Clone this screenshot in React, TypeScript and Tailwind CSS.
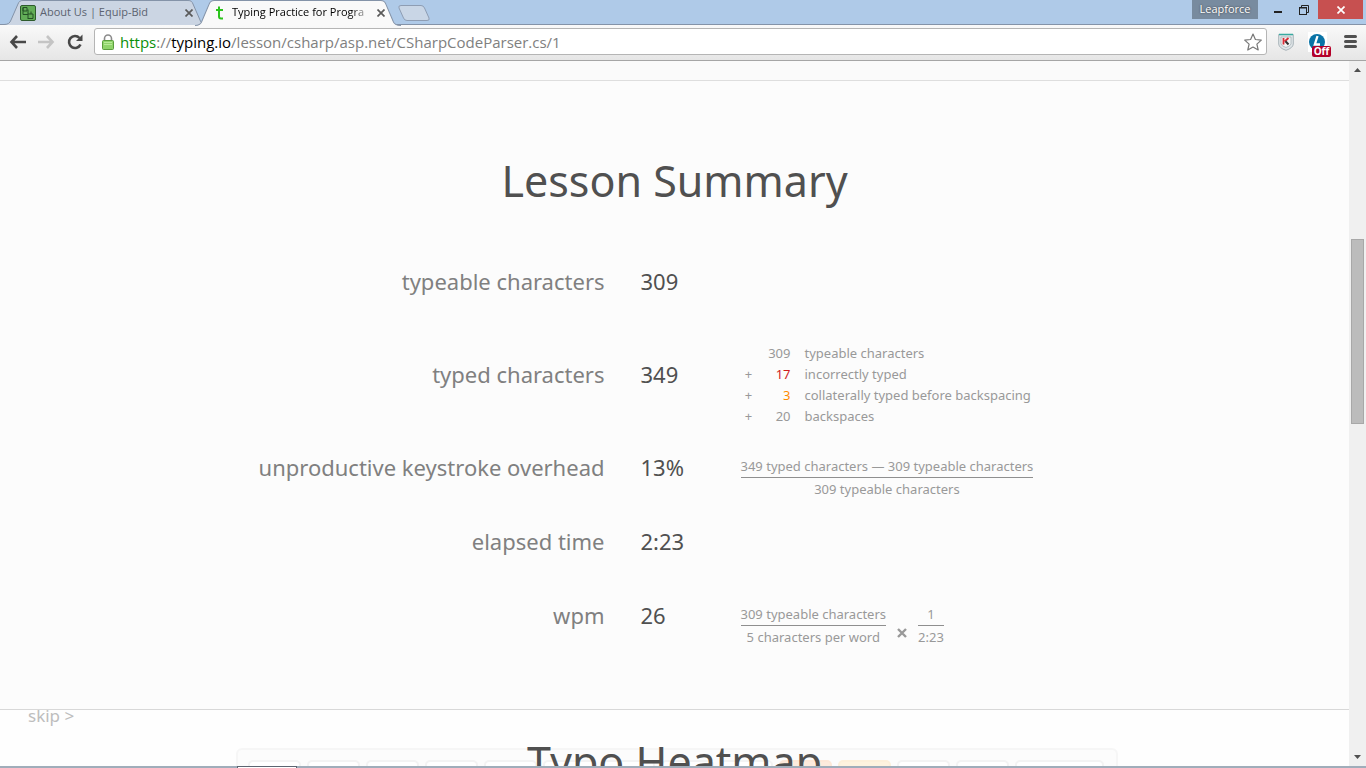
import React from "react";

type Stat = { label: string; value: string; tall?: boolean; detail?: React.ReactNode };

function Fraction({ top, bottom }: { top: string; bottom: string }) {
  return (
    <span className="inline-flex flex-col text-center">
      <span className="h-[23px] border-b border-[#8f8f8f] leading-[22px]">{top}</span>
      <span className="h-[23px] leading-[22px]">{bottom}</span>
    </span>
  );
}

const breakdown = [
  { sign: "", count: "309", text: "typeable characters", color: "text-[#999]" },
  { sign: "+", count: "17", text: "incorrectly typed", color: "text-[#d01c1c]" },
  { sign: "+", count: "3", text: "collaterally typed before backspacing", color: "text-[#ff8c00]" },
  { sign: "+", count: "20", text: "backspaces", color: "text-[#999]" },
];

const stats: Stat[] = [
  { label: "typeable characters", value: "309" },
  {
    label: "typed characters",
    value: "349",
    tall: true,
    detail: (
      <ul>
        {breakdown.map((b) => (
          <li key={b.text} className="flex h-[21px] items-center">
            <span className="w-4 text-center text-[13px]">{b.sign}</span>
            <span className={`w-[34px] text-right ${b.color}`}>{b.count}</span>
            <span className="pl-[14px]">{b.text}</span>
          </li>
        ))}
      </ul>
    ),
  },
  {
    label: "unproductive keystroke overhead",
    value: "13%",
    detail: <Fraction top="349 typed characters — 309 typeable characters" bottom="309 typeable characters" />,
  },
  { label: "elapsed time", value: "2:23" },
  {
    label: "wpm",
    value: "26",
    detail: (
      <div className="flex items-end">
        <Fraction top="309 typeable characters" bottom="5 characters per word" />
        <svg className="mx-[11px] mb-[11px] h-[10px] w-[10px]" viewBox="0 0 10 10" fill="none" stroke="#999" strokeWidth="2.4" aria-label="times">
          <path d="M1 1l8 8M9 1l-8 8" />
        </svg>
        <Fraction top="1" bottom="2:23" />
      </div>
    ),
  },
];

const keys = ["", "", "", "", "", "", "", "", "", "hot", "warm", "", "", "wide"];
const keyStyle: Record<string, string> = {
  "": "w-[53px] border-[#f3f3f3] bg-white",
  hot: "w-[53px] border-[#fde8d8] bg-[#fdebdd]",
  warm: "w-[53px] border-[#fdf0da] bg-[#fef3df]",
  wide: "w-[89px] border-[#f3f3f3] bg-white",
};

function TabShape({ fill }: { fill: string }) {
  return (
    <svg className="absolute inset-0 h-full w-full" viewBox="0 0 204 25" preserveAspectRatio="none" aria-hidden="true">
      <path d="M0 24.5C4 24.5 6 23 7 20L14 4C15 1.500 16 .5 19 .5H184C187 .5 188 1.500 189 4L196 20C197 23 199 24.500 204 24.500V25H0Z" fill={fill} />
      <path d="M0 24.5C4 24.5 6 23 7 20L14 4C15 1.500 16 .5 19 .5H184C187 .5 188 1.500 189 4L196 20C197 23 199 24.500 204 24.500" fill="none" stroke="#8493a8" />
    </svg>
  );
}

function CloseX() {
  return (
    <svg className="h-2 w-2" viewBox="0 0 8 8" stroke="#5a5a5a" strokeWidth="1.700" aria-hidden="true">
      <path d="M.5.5l7 7M7.500.5l-7 7" />
    </svg>
  );
}

function TabStrip() {
  return (
    <div className="flex h-[25px] shrink-0 items-start border-b border-[#8493a8] bg-[#afcae8] font-['Open_Sans',sans-serif] text-xs">
      <div className="relative ml-1 h-[25px] w-[204px]">
        <TabShape fill="#cbd5e3" />
        <div className="relative flex h-[25px] items-center pl-4 text-[#5b6370]">
          <svg className="h-4 w-4 shrink-0" viewBox="0 0 16 16" aria-hidden="true">
            <rect x=".5" y=".5" width="15" height="15" rx="1.500" fill="#62ad57" stroke="#2e5b2d" />
            <path d="M3 2.500h4v3.500h-4zM3 2.500v7h5M8 4.500v9.500M8 9h5v4.500h-5M11 9v-2.500" fill="none" stroke="#245026" />
          </svg>
          <span className="ml-1 flex-1 whitespace-nowrap text-[11px]">About Us | Equip-Bid</span>
          <button className="mr-[15px]" aria-label="Close About Us"><CloseX /></button>
        </div>
      </div>
      <div className="relative -ml-[13px] h-[26px] w-[206px]">
        <TabShape fill="#f9f9f9" />
        <div className="relative flex h-[25px] items-center pl-[17px] text-black">
          <svg className="h-4 w-4 shrink-0" viewBox="0 0 16 16" fill="none" stroke="#2bc41c" strokeWidth="2" aria-hidden="true">
            <path d="M7 1.500v10q0 2 2 2h2M4 5h7" />
          </svg>
          <span className="ml-1 w-[140px] whitespace-nowrap text-[11px] [mask-image:linear-gradient(to_right,black_85%,transparent)]">
            Typing Practice for Progra
          </span>
          <button className="ml-[5px]" aria-label="Close Typing Practice"><CloseX /></button>
        </div>
      </div>
      <button aria-label="New tab" className="mt-[5px] -ml-[3px]">
        <svg className="h-4 w-8" viewBox="0 0 32 16" aria-hidden="true">
          <path d="M3 .5H23Q25.500.5 26.500 3L31 13Q32 15.500 29 15.500H9Q6.500 15.500 5.500 13L1 3Q0 .5 3 .5Z" fill="#c9d6e6" stroke="#8e9db3" />
        </svg>
      </button>
      <div className="mr-[3px] ml-auto flex items-start">
        <span className="h-[19px] w-[66px] bg-[#788b9f] text-center text-[11px] leading-[18px] text-white [text-shadow:0_0_2px_#333]">Leapforce</span>
        <button aria-label="Minimize" className="flex h-5 w-6 items-end justify-end pb-[7px]">
          <span className="h-[2px] w-2 bg-[#222]" />
        </button>
        <button aria-label="Restore" className="flex h-5 w-[27px] items-center justify-end">
          <svg className="h-[10px] w-[10px]" viewBox="0 0 10 10" fill="none" stroke="#222" aria-hidden="true">
            <path d="M2.500 2V.5h7v7h-1.500" />
            <rect x=".5" y="2.500" width="7" height="7" />
            <path d="M0 3h8" />
          </svg>
        </button>
        <button aria-label="Close window" className="ml-[9px] flex h-[19px] w-[45px] items-center justify-center bg-[#c75050]">
          <svg className="h-2 w-2" viewBox="0 0 8 8" stroke="white" strokeWidth="1.700" aria-hidden="true">
            <path d="M.5.5l7 7M7.500.5l-7 7" />
          </svg>
        </button>
      </div>
    </div>
  );
}

function Toolbar() {
  return (
    <div className="flex h-9 shrink-0 items-center border-b border-[#a5a5a5] bg-linear-to-b from-[#f9f9f9] to-[#e6e6e6] pb-[2px] pl-[9px] font-['Open_Sans',sans-serif]">
      <button aria-label="Back" className="mr-3">
        <svg className="h-[14px] w-[17px]" viewBox="0 0 17 14" fill="none" stroke="#484848" strokeWidth="2.600" aria-hidden="true">
          <path d="M8 1L2.500 7 8 13M2.500 7H17" />
        </svg>
      </button>
      <button aria-label="Forward" className="mr-3">
        <svg className="h-[14px] w-[17px]" viewBox="0 0 17 14" fill="none" stroke="#c4c4c4" strokeWidth="2.600" aria-hidden="true">
          <path d="M9 1l5.500 6L9 13M14.500 7H0" />
        </svg>
      </button>
      <button aria-label="Reload" className="mr-[11px]">
        <svg className="h-4 w-4" viewBox="0 0 16 16" aria-hidden="true">
          <path d="M13.500 10.500A6 6 0 1 1 12.500 4" fill="none" stroke="#484848" strokeWidth="2.600" />
          <path d="M15.500.500V7H9Z" fill="#484848" />
        </svg>
      </button>
      <div className="flex h-[27px] min-w-0 flex-1 items-center rounded-[3px] border border-[#b5b5b5] bg-white pr-1">
        <svg className="ml-[7px] h-4 w-3 shrink-0" viewBox="0 0 12 16" aria-hidden="true">
          <path d="M2.500 8V4.500a3.500 3.500 0 0 1 7 0V8" fill="none" stroke="#8b8b8b" strokeWidth="1.600" />
          <rect x=".5" y="6.500" width="11" height="9" rx="1" fill="#8fd46a" stroke="#5a9d3c" />
          <path d="M2 8.500h8M2 10.500h8" stroke="#b8ea98" />
        </svg>
        <div className="ml-[6px] flex-1 whitespace-nowrap text-[15px] leading-5 text-[#808080]">
          <span className="text-[#0a8f0a]">https</span>://<span className="text-black">typing.io</span>/lesson/csharp/asp.net/CSharpCodeParser.cs/1
        </div>
        <button aria-label="Bookmark">
          <svg className="h-[18px] w-[18px]" viewBox="0 0 18 18" fill="white" stroke="#777" strokeWidth="1.200" strokeLinejoin="round" aria-hidden="true">
            <path d="M9 1l2.400 5.500 5.900.6-4.400 4 1.300 5.900L9 14l-5.200 3 1.300-5.900-4.400-4 5.900-.6z" />
          </svg>
        </button>
      </div>
      <button aria-label="Security extension" className="ml-[11px]">
        <svg className="h-[18px] w-4" viewBox="0 0 16 18" aria-hidden="true">
          <path d="M.7 1.500H15.300V11Q15 15 8 17.300Q1 15 .7 11Z" fill="#e0e5e8" stroke="#a9b4b9" />
          <path d="M1 1.500H15" stroke="#38aaa0" strokeWidth="1.500" />
          <path d="M3 4h10v7q-.5 2-5 3.500Q3.500 13 3 11Z" fill="#f3f4f4" stroke="#9caab0" strokeWidth=".7" />
          <path d="M5.500 5v6.500" stroke="#d92c36" strokeWidth="1.800" />
          <path d="M10.500 5L6.500 8.500" stroke="#d92c36" strokeWidth="1.800" />
          <path d="M7.500 8.300l3 3.200" stroke="#333" strokeWidth="2" />
        </svg>
      </button>
      <button aria-label="Extension off" className="relative ml-[14px] h-5 w-[19px] bg-white">
        <svg className="h-[18px] w-[18px]" viewBox="0 0 18 18" aria-hidden="true">
          <circle cx="9" cy="9" r="8" fill="#0973a6" />
          <path d="M9.500 3L6.800 11.500H12" fill="none" stroke="white" strokeWidth="2.300" />
        </svg>
        <span className="absolute -right-1 -bottom-[5px] h-[11px] w-[19px] rounded-[2px] bg-[#b3002a] text-center text-[10px] leading-[10px] font-bold text-white">Off</span>
      </button>
      <button aria-label="Menu" className="mr-[9px] ml-[17px] flex flex-col gap-[2px]">
        <span className="h-[3px] w-[13px] rounded-sm bg-[#505050]" />
        <span className="h-[3px] w-[13px] rounded-sm bg-[#505050]" />
        <span className="h-[3px] w-[13px] rounded-sm bg-[#505050]" />
      </button>
    </div>
  );
}

function Scrollbar() {
  return (
    <div className="flex w-[17px] shrink-0 flex-col items-center justify-between bg-[#f0f0f0] py-[7px]" aria-hidden="true">
      <svg className="h-1 w-[7px]" viewBox="0 0 7 4" fill="#505050"><path d="M0 4L3.500 0 7 4z" /></svg>
      <div className="flex w-full flex-1 flex-col items-center">
        <div className="flex-[168]" />
        <div className="w-[13px] flex-[184] border border-[#a8a8a8] bg-[#bcbcbc]" />
        <div className="flex-[332]" />
      </div>
      <svg className="h-1 w-[7px]" viewBox="0 0 7 4" fill="#505050"><path d="M0 0L3.500 4 7 0z" /></svg>
    </div>
  );
}

export default function App() {
  return (
    <div className="relative flex h-screen flex-col overflow-hidden bg-white">
      <TabStrip />
      <Toolbar />
      <div className="flex min-h-0 flex-1">
        <main className="min-w-0 flex-1 overflow-hidden bg-[#fefefe] font-['Noto_Sans',sans-serif] text-[#505050]">
          <div className="h-5 border-b border-[#dedede] bg-[#fafafa]" />
          <section className="border-b border-[#d8d8d8] bg-[#fcfcfc] pt-[70px] pb-14">
            <h1 className="mb-[34px] text-center text-[43px] leading-[60px]">Lesson Summary</h1>
            <table className="mx-auto w-full max-w-[880px] table-fixed">
              <tbody>
                {stats.map((s) => (
                  <tr key={s.label} className={s.tall ? "h-28" : "h-[74px]"}>
                    <th scope="row" className="w-[370px] pb-[2px] text-right text-[22px] font-normal whitespace-nowrap text-[#808080]">{s.label}</th>
                    <td className="w-[136px] pb-[2px] pl-9 text-[22px]">{s.value}</td>
                    <td className="pt-6 align-top text-[13px] whitespace-nowrap text-[#999]">{s.detail}</td>
                  </tr>
                ))}
              </tbody>
            </table>
          </section>
          <section className="pt-[22px]">
            <h1 className="relative z-10 text-center text-[43px] leading-[60px]">Typo Heatmap</h1>
            <div className="-mt-11 flex justify-center pl-1">
              <div className="flex h-60 w-[882px] gap-[6px] rounded-md border-2 border-[#f6f6f6] bg-[#fcfcfc] p-[10px]">
                {keys.map((k, i) => (
                  <div key={i} className={`h-[53px] shrink-0 rounded-[5px] border-2 ${keyStyle[k]}`} />
                ))}
              </div>
            </div>
          </section>
        </main>
        <Scrollbar />
      </div>
      <div className="flex h-[2px] shrink-0 bg-[#a0adba]">
        <div className="ml-[237px] w-[60px] border border-b-0 border-[#5c6470] bg-white" />
      </div>
      <a href="#next" className="absolute bottom-[40px] left-7 font-['Noto_Sans',sans-serif] text-[17px] leading-6 text-[#bdbdbd]">skip &gt;</a>
    </div>
  );
}
